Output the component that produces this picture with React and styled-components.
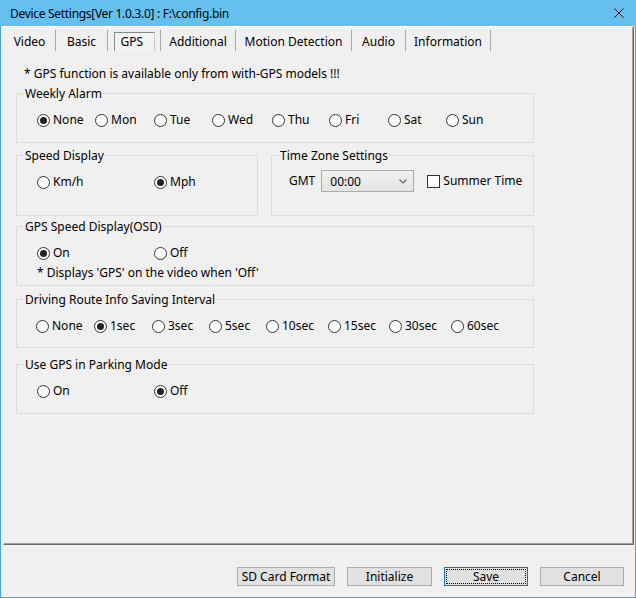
import React from 'react';
import styled, { createGlobalStyle, css } from 'styled-components';

const FONT = `"Noto Sans", "Open Sans", "Liberation Sans", sans-serif`;

const Global = createGlobalStyle`
  html, body { margin: 0; padding: 0; background: #f0f0f0; }
  * { box-sizing: border-box; }
`;

const Window = styled.div`
  width: 636px;
  height: 598px;
  display: flex;
  flex-direction: column;
  background: #f0f0f0;
  border: 1px solid #4ea3de;
  border-top: none;
  font-family: ${FONT};
  font-size: 12px;
  color: #000;
`;

const TitleBar = styled.div`
  height: 26px;
  flex: none;
  display: flex;
  align-items: center;
  justify-content: space-between;
  margin: 0 -1px;
  padding: 0 12px 0 10px;
  background: #65c0f0;
`;

const Title = styled.span`
  line-height: 16px;
  padding-top: 1px;
  letter-spacing: -0.3px;
`;

const Body = styled.div`
  flex: 1;
  display: flex;
  flex-direction: column;
  padding: 0 1px 0 2px;
`;

const Panel = styled.div`
  height: 519px;
  flex: none;
  display: flex;
  flex-direction: column;
  border-top: 1px solid #ffffff;
  border-left: 1px solid #ffffff;
  border-right: 1px solid #696969;
  border-bottom: 1px solid #696969;
  box-shadow: inset -1px -1px 0 #a0a0a0;
`;

const TabStrip = styled.div`
  display: flex;
  padding-top: 3px;
  height: 24px;
`;

const Tab = styled.div`
  width: ${(p) => p.$w}px;
  height: 21px;
  flex: none;
  display: flex;
  align-items: center;
  justify-content: center;
  padding-top: 3px;
  border-right: 1px solid #a9a9a9;
  white-space: nowrap;
  line-height: 16px;
`;

const TabLabel = styled.span`
  line-height: 16px;
  ${(p) =>
    p.$active &&
    css`
      align-self: flex-start;
      margin-top: -1px;
      width: 41px;
      height: 19px;
      padding: 1px 0 0 6px;
      border-style: solid;
      border-width: 1px 1px 0 1px;
      border-color: #8a8a8a #c9c9c9 transparent #8a8a8a;
      background: #f3f3f3;
    `}
`;

const Content = styled.div`
  padding-left: 12px;
`;

const Note = styled.div`
  line-height: 16px;
  margin-top: ${(p) => p.$mt || 0}px;
  padding-left: ${(p) => p.$pl || 0}px;
  white-space: nowrap;
`;

const GroupRow = styled.div`
  display: flex;
  gap: 13px;
  margin-top: ${(p) => p.$mt || 0}px;
`;

const Group = styled.div`
  width: ${(p) => p.$w}px;
  height: ${(p) => p.$h}px;
  margin-top: ${(p) => p.$mt || 0}px;
  border: 1px solid #dcdcdc;
  flex: none;
`;

const Legend = styled.div`
  width: fit-content;
  height: 16px;
  line-height: 16px;
  margin: -8px 0 0 7px;
  padding: 0 1px;
  background: #f0f0f0;
  white-space: nowrap;
`;

const Row = styled.div`
  display: flex;
  align-items: center;
  height: 16px;
  margin-top: ${(p) => (p.$mt === undefined ? 10 : p.$mt)}px;
  padding-left: ${(p) => (p.$pl === undefined ? 20 : p.$pl)}px;
`;

const Option = styled.label`
  display: flex;
  align-items: center;
  gap: 3px;
  flex: none;
  width: ${(p) => (p.$w ? `${p.$w}px` : 'auto')};
  height: 16px;
  line-height: 16px;
  white-space: nowrap;
`;

const Circle = styled.span`
  width: 13px;
  height: 13px;
  flex: none;
  border-radius: 50%;
  border: 1px solid #333333;
  background: #ffffff;
  display: flex;
  align-items: center;
  justify-content: center;
  &::after {
    content: '';
    width: 7px;
    height: 7px;
    border-radius: 50%;
    background: #222222;
    display: ${(p) => (p.$on ? 'block' : 'none')};
  }
`;

const Label = styled.span`
  line-height: 16px;
  margin-right: ${(p) => p.$mr || 0}px;
`;

const Select = styled.div`
  width: 93px;
  height: 22px;
  flex: none;
  display: flex;
  align-items: center;
  justify-content: space-between;
  padding: 0 6px 0 8px;
  border: 1px solid #acacac;
  background: linear-gradient(#f0f0f0, #e5e5e5);
  margin-right: 13px;
`;

const CheckBox = styled.span`
  width: 13px;
  height: 13px;
  flex: none;
  border: 1px solid #333333;
  background: #ffffff;
  margin-right: 3px;
`;

const ButtonBar = styled.div`
  display: flex;
  justify-content: flex-end;
  gap: 12px;
  padding: 22px 10px 0 0;
`;

const Button = styled.div`
  width: ${(p) => p.$w}px;
  height: 19px;
  flex: none;
  display: flex;
  align-items: center;
  justify-content: center;
  background: #e1e1e1;
  border: 1px solid ${(p) => (p.$focus ? '#0078d7' : '#adadad')};
  line-height: 16px;
  ${(p) =>
    p.$focus &&
    css`
      outline: 1px dotted #000;
      outline-offset: -3px;
    `}
`;

const CloseIcon = () => (
  <svg width="10" height="10" viewBox="0 0 10 10">
    <path d="M0.5 0.5 L9.5 9.5 M9.5 0.5 L0.5 9.5" stroke="#000" strokeWidth="1" fill="none" />
  </svg>
);

const Chevron = () => (
  <svg width="8" height="5" viewBox="0 0 8 5">
    <path d="M0.5 0.5 L4 4 L7.5 0.5" stroke="#606060" strokeWidth="1.2" fill="none" />
  </svg>
);

const tabs = [
  { t: 'Video', w: 52 },
  { t: 'Basic', w: 52 },
  { t: 'GPS', w: 53, active: true },
  { t: 'Additional', w: 75 },
  { t: 'Motion Detection', w: 116 },
  { t: 'Audio', w: 54 },
  { t: 'Information', w: 85 },
];

const weekly = [
  ['None', 58, true],
  ['Mon', 59],
  ['Tue', 58],
  ['Wed', 60],
  ['Thu', 57],
  ['Fri', 59],
  ['Sat', 58],
  ['Sun', 0],
];

const intervals = [
  ['None', 58],
  ['1sec', 58, true],
  ['3sec', 57],
  ['5sec', 57],
  ['10sec', 62],
  ['15sec', 61],
  ['30sec', 62],
  ['60sec', 0],
];

const Radio = ({ label, w, on }) => (
  <Option $w={w}>
    <Circle $on={on} />
    <Label>{label}</Label>
  </Option>
);

export default function App() {
  return (
    <>
      <Global />
      <Window>
        <TitleBar>
          <Title>Device Settings[Ver 1.0.3.0] : F:\config.bin</Title>
          <CloseIcon />
        </TitleBar>
        <Body>
          <Panel>
            <TabStrip>
              {tabs.map((t) => (
                <Tab key={t.t} $w={t.w}>
                  <TabLabel $active={t.active}>{t.t}</TabLabel>
                </Tab>
              ))}
            </TabStrip>
            <Content>
              <Note $mt={15} $pl={8}>
                * GPS function is available only from with-GPS models !!!
              </Note>

              <Group $w={518} $h={50} $mt={11}>
                <Legend>Weekly Alarm</Legend>
                <Row>
                  {weekly.map(([l, w, on]) => (
                    <Radio key={l} label={l} w={w} on={on} />
                  ))}
                </Row>
              </Group>

              <GroupRow $mt={12}>
                <Group $w={242} $h={61}>
                  <Legend>Speed Display</Legend>
                  <Row>
                    <Radio label="Km/h" w={117} />
                    <Radio label="Mph" on />
                  </Row>
                </Group>
                <Group $w={263} $h={61}>
                  <Legend>Time Zone Settings</Legend>
                  <Row $pl={17} $mt={9}>
                    <Label $mr={6}>GMT</Label>
                    <Select>
                      <span>00:00</span>
                      <Chevron />
                    </Select>
                    <CheckBox />
                    <Label>Summer Time</Label>
                  </Row>
                </Group>
              </GroupRow>

              <Group $w={518} $h={60} $mt={10}>
                <Legend>GPS Speed Display(OSD)</Legend>
                <Row>
                  <Radio label="On" w={117} on />
                  <Radio label="Off" />
                </Row>
                <Note $mt={4} $pl={20}>
                  * Displays 'GPS' on the video when 'Off'
                </Note>
              </Group>

              <Group $w={518} $h={49} $mt={13}>
                <Legend>Driving Route Info Saving Interval</Legend>
                <Row $pl={19}>
                  {intervals.map(([l, w, on]) => (
                    <Radio key={l} label={l} w={w} on={on} />
                  ))}
                </Row>
              </Group>

              <Group $w={518} $h={50} $mt={16}>
                <Legend>Use GPS in Parking Mode</Legend>
                <Row>
                  <Radio label="On" w={117} />
                  <Radio label="Off" on />
                </Row>
              </Group>
            </Content>
          </Panel>
          <ButtonBar>
            <Button $w={98}>SD Card Format</Button>
            <Button $w={85}>Initialize</Button>
            <Button $w={84} $focus>
              Save
            </Button>
            <Button $w={84}>Cancel</Button>
          </ButtonBar>
        </Body>
      </Window>
    </>
  );
}
